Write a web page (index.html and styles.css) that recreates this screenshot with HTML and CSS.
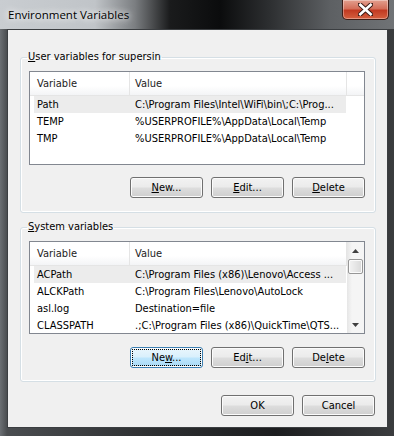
FILE: index.html
```html
<!DOCTYPE html>
<html lang="en">
  <head>
    <meta charset="UTF-8" />
    <title>Environment Variables</title>
    <link rel="stylesheet" href="styles.css">
  </head>
  <body>
    <div class="window">
      <div class="titlebar">
        <span class="title">Environment Variables</span>
        <div class="close">
          <svg width="15" height="13" viewBox="0 0 15 13">
            <path d="M2 1.5 L13 11.5 M13 1.5 L2 11.5" stroke="#3a1a14" stroke-width="4.6" stroke-linecap="square" />
            <path d="M2.3 1.8 L12.7 11.2 M12.7 1.8 L2.3 11.2" stroke="#fff" stroke-width="2.6" stroke-linecap="square" />
          </svg>
        </div>
      </div>

      <div class="client">
        <!-- Variables utilisateur -->
        <fieldset class="group">
          <legend><u>U</u>ser variables for supersin</legend>
          <div class="list">
            <div class="list-main">
              <div class="list-head">
                <div class="head-var">Variable</div>
                <div class="head-val">Value</div>
              </div>
              <div class="row selected">
                <span class="cell-var">Path</span>
                <span class="cell-val">C:\Program Files\Intel\WiFi\bin\;C:\Prog...</span>
              </div>
              <div class="row">
                <span class="cell-var">TEMP</span>
                <span class="cell-val">%USERPROFILE%\AppData\Local\Temp</span>
              </div>
              <div class="row">
                <span class="cell-var">TMP</span>
                <span class="cell-val">%USERPROFILE%\AppData\Local\Temp</span>
              </div>
            </div>
          </div>
          <div class="buttons">
            <button class="btn"><u>N</u>ew...</button>
            <button class="btn"><u>E</u>dit...</button>
            <button class="btn"><u>D</u>elete</button>
          </div>
        </fieldset>

        <!-- Variables système -->
        <fieldset class="group group-system">
          <legend><u>S</u>ystem variables</legend>
          <div class="list list-short">
            <div class="list-main">
              <div class="list-head">
                <div class="head-var">Variable</div>
                <div class="head-val">Value</div>
              </div>
              <div class="row selected">
                <span class="cell-var">ACPath</span>
                <span class="cell-val">C:\Program Files (x86)\Lenovo\Access ...</span>
              </div>
              <div class="row">
                <span class="cell-var">ALCKPath</span>
                <span class="cell-val">C:\Program Files\Lenovo\AutoLock</span>
              </div>
              <div class="row">
                <span class="cell-var">asl.log</span>
                <span class="cell-val">Destination=file</span>
              </div>
              <div class="row">
                <span class="cell-var">CLASSPATH</span>
                <span class="cell-val">.;C:\Program Files (x86)\QuickTime\QTS...</span>
              </div>
            </div>
            <div class="scrollbar">
              <div class="arrow">
                <svg width="7" height="4" viewBox="0 0 7 4"><path d="M0 4 L3.5 0 L7 4 Z" fill="#404040" /></svg>
              </div>
              <div class="thumb"></div>
              <div class="track"></div>
              <div class="arrow">
                <svg width="7" height="4" viewBox="0 0 7 4"><path d="M0 0 L3.5 4 L7 0 Z" fill="#404040" /></svg>
              </div>
            </div>
          </div>
          <div class="buttons">
            <button class="btn focused">Ne<u>w</u>...</button>
            <button class="btn">Ed<u>i</u>t...</button>
            <button class="btn">De<u>l</u>ete</button>
          </div>
        </fieldset>

        <div class="dialog-buttons">
          <button class="btn">OK</button>
          <button class="btn">Cancel</button>
        </div>
      </div>
    </div>
  </body>
</html>
```

FILE: styles.css
```css
* {
  box-sizing: border-box;
  margin: 0;
  padding: 0;
}

body {
  background: #ffffff;
  font-family: "DejaVu Sans Condensed", "DejaVu Sans", sans-serif;
  font-size: 11px;
  color: #000;
}

.window {
  width: 394px;
  height: 436px;
  display: flex;
  flex-direction: column;
  background: linear-gradient(
    to right,
    #6b6f73 0,
    #4a4d50 7px,
    #2c2e30 40%,
    #1c1d1f 70%,
    #3a3c3e 100%
  );
}

/* Barre de titre (verre Aero) */
.titlebar {
  height: 29px;
  display: flex;
  justify-content: space-between;
  align-items: flex-start;
  padding-left: 8px;
  padding-right: 5px;
  background: linear-gradient(
    to right,
    #c9cdd1 0,
    #c0c4c8 95px,
    #7b7e81 135px,
    #1a1b1c 170px,
    #0b0c0d 220px,
    #2d2f31 270px,
    #5d6063 330px,
    #707376 394px
  );
}

.title {
  font-family: "Open Sans", "Noto Sans", sans-serif;
  font-size: 11.5px;
  line-height: 16px;
  margin-top: 7px;
  color: #000;
  text-shadow: 0 0 6px #fff, 0 0 10px #fff;
}

.close {
  width: 47px;
  height: 20px;
  border: 1px solid #3e1d17;
  border-top: none;
  border-radius: 0 0 5px 5px;
  background: linear-gradient(
    to bottom,
    #e3a08f 0%,
    #d46f5a 45%,
    #c23a22 55%,
    #d5603f 100%
  );
  box-shadow: inset 0 0 0 1px rgba(255, 255, 255, 0.35);
  display: flex;
  align-items: center;
  justify-content: center;
}

.client {
  flex: 1;
  margin: 0 6px 8px 7px;
  border: 1px solid #3b3e41;
  background: #f0f0f0;
  padding: 0 11px 0 12px;
}

/* Groupes */
.group {
  border: 1px solid #d5dfe5;
  border-radius: 3px;
  box-shadow: inset 0 0 0 1px #fff;
  margin-top: 20px;
  padding: 7px 10px 14px 8px;
}

.group-system {
  margin-top: 7px;
  padding-bottom: 13px;
}

.group legend {
  line-height: 14px;
  padding: 0 1px;
  margin-left: -2px;
}

/* Listes */
.list {
  display: flex;
  height: 94px;
  border: 1px solid #828790;
  background: #fff;
}

.list-short {
  height: 93px;
}

.list-main {
  flex: 1;
  overflow: hidden;
}

.list-head {
  display: flex;
  height: 24px;
  border-bottom: 1px solid #e5e5e5;
  background: linear-gradient(to bottom, #ffffff 0%, #ffffff 60%, #f3f4f6 100%);
  color: #222;
}

.head-var,
.head-val {
  border-right: 1px solid #e5e5e5;
  line-height: 23px;
  white-space: nowrap;
}

.head-var {
  width: 100px;
  padding-left: 7px;
}

.head-val {
  width: 217px;
  padding-left: 5px;
}

.row {
  display: flex;
  height: 17px;
  line-height: 17px;
  margin-left: 4px;
  width: 312px;
  white-space: nowrap;
}

.row.selected {
  background: #ececec;
}

.cell-var {
  width: 95px;
  padding-left: 3px;
  overflow: hidden;
}

.cell-val {
  width: 217px;
  padding-left: 6px;
  overflow: hidden;
}

/* Barre de défilement */
.scrollbar {
  width: 17px;
  display: flex;
  flex-direction: column;
  background: linear-gradient(to right, #e6e6e6, #f5f5f5 30%, #f5f5f5);
}

.arrow {
  height: 17px;
  display: flex;
  align-items: center;
  justify-content: center;
}

.thumb {
  height: 15px;
  margin: 0 1px;
  border: 1px solid #979797;
  border-radius: 2px;
  background: linear-gradient(to right, #f3f3f3, #e6e6e6 50%, #d9d9d9);
  box-shadow: inset 0 0 0 1px #fbfbfb;
}

.track {
  flex: 1;
}

/* Boutons */
.buttons {
  display: flex;
  justify-content: flex-end;
  gap: 8px;
  margin-top: 12px;
}

.group-system .buttons {
  margin-top: 13px;
}

.btn {
  width: 73px;
  height: 21px;
  border: 1px solid #707070;
  border-radius: 3px;
  background: linear-gradient(
    to bottom,
    #f2f2f2 0%,
    #ebebeb 48%,
    #dddddd 52%,
    #cfcfcf 100%
  );
  box-shadow: inset 0 0 0 1px #fbfbfb;
  font-family: inherit;
  font-size: 11px;
  color: #000;
}

.btn.focused {
  border-color: #3c7fb1;
  background: linear-gradient(
    to bottom,
    #eaf6fd 0%,
    #d9f0fc 48%,
    #bee6fd 52%,
    #a7d9f5 100%
  );
  outline: 1px dotted #000;
  outline-offset: -3px;
}

.dialog-buttons {
  display: flex;
  justify-content: flex-end;
  gap: 8px;
  margin-top: 13px;
  margin-right: 1px;
}
```
